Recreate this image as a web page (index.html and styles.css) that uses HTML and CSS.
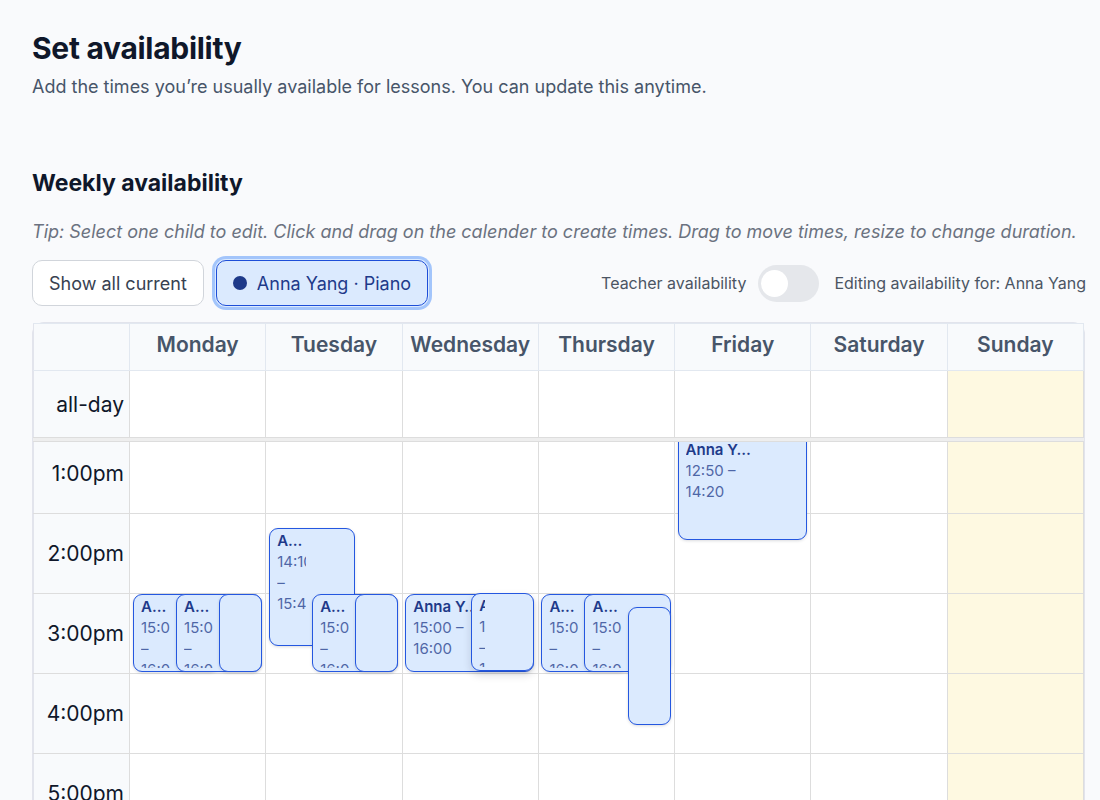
FILE: index.html
```html
<!DOCTYPE html>
<html lang="en">
<head>
    <meta charset="UTF-8">
    <meta name="viewport" content="width=device-width, initial-scale=1.0">
    <title>Set availability</title>
    <link rel="stylesheet" href="styles.css">
</head>
<body>
    <main class="page">
        <header class="page-header">
            <h1>Set availability</h1>
            <p>Add the times you’re usually available for lessons. You can update this anytime.</p>
        </header>

        <h2>Weekly availability</h2>
        <p class="tip">Tip: Select one child to edit. Click and drag on the calender to create times. Drag to move times, resize to change duration.</p>

        <div class="toolbar">
            <button type="button" class="chip">Show all current</button>
            <button type="button" class="chip chip-active"><span class="dot"></span>Anna Yang · Piano</button>
            <div class="toolbar-right">
                <label for="teacher">Teacher availability</label>
                <input type="checkbox" id="teacher" class="switch">
                <span class="editing">Editing availability for: Anna Yang</span>
            </div>
        </div>

        <div class="calendar">
            <table class="days">
                <thead>
                    <tr>
                        <th class="axis"></th>
                        <th>Monday</th>
                        <th>Tuesday</th>
                        <th>Wednesday</th>
                        <th>Thursday</th>
                        <th>Friday</th>
                        <th>Saturday</th>
                        <th>Sunday</th>
                    </tr>
                </thead>
                <tbody>
                    <tr>
                        <td class="axis">all-day</td>
                        <td></td><td></td><td></td><td></td><td></td><td></td><td class="today"></td>
                    </tr>
                </tbody>
            </table>
            <div class="divider"></div>
            <div class="scroller">
                <div class="timegrid">
                    <table class="slots">
                        <tr><td class="axis">1:00pm</td><td></td><td></td><td></td><td></td><td></td><td></td><td class="today"></td></tr>
                        <tr><td class="axis">2:00pm</td><td></td><td></td><td></td><td></td><td></td><td></td><td class="today"></td></tr>
                        <tr><td class="axis">3:00pm</td><td></td><td></td><td></td><td></td><td></td><td></td><td class="today"></td></tr>
                        <tr><td class="axis">4:00pm</td><td></td><td></td><td></td><td></td><td></td><td></td><td class="today"></td></tr>
                        <tr><td class="axis">5:00pm</td><td></td><td></td><td></td><td></td><td></td><td></td><td class="today"></td></tr>
                    </table>
                    <!-- one column per day, events sit over the slots -->
                    <div class="events">
                        <div class="day">
                            <div class="event at-1500 first"><b>Anna Yang</b><span>15:00 – 16:00</span></div>
                            <div class="event at-1500 second"><b>Anna Yang</b><span>15:00 – 16:00</span></div>
                            <div class="event at-1500 third"></div>
                        </div>
                        <div class="day">
                            <div class="event at-1410 first"><b>Anna Yang</b><span>14:10 – 15:40</span></div>
                            <div class="event at-1500 second"><b>Anna Yang</b><span>15:00 – 16:00</span></div>
                            <div class="event at-1500 third"></div>
                        </div>
                        <div class="day">
                            <div class="event at-1500"><b>Anna Yang</b><span>15:00 – 16:00</span></div>
                            <div class="event at-1500 half hovered"><b>Anna Yang</b><span>15:00 – 16:00</span></div>
                        </div>
                        <div class="day">
                            <div class="event at-1500 first"><b>Anna Yang</b><span>15:00 – 16:00</span></div>
                            <div class="event at-1500 second"><b>Anna Yang</b><span>15:00 – 16:00</span></div>
                            <div class="event at-1510 third"></div>
                        </div>
                        <div class="day">
                            <div class="event at-1250"><b>Anna Yang</b><span>12:50 – 14:20</span></div>
                        </div>
                    </div>
                </div>
            </div>
        </div>
    </main>
</body>
</html>
```
FILE: styles.css
```css
* {
    box-sizing: border-box;
}

body {
    margin: 0;
    font-family: Inter, "Liberation Sans", sans-serif;
    background: #f9fafc;
    color: #0f172a;
}

h1, h2, p {
    margin: 0;
}

.page {
    display: flex;
    flex-direction: column;
    height: 100vh;
    padding: 28px 14px 0 32px;
    overflow: hidden;
}

.page-header {
    margin-bottom: 64px;
}

h1 {
    font-size: 30px;
    line-height: 40px;
    letter-spacing: -0.01em;
}

.page-header p {
    margin-top: 5px;
    font-size: 18px;
    line-height: 28px;
    color: #475569;
}

h2 {
    font-size: 23px;
    line-height: 36px;
    font-weight: 700;
}

.tip {
    margin-top: 19px;
    font-size: 18px;
    line-height: 24px;
    font-style: italic;
    color: #6b7280;
    white-space: nowrap;
}

.toolbar {
    display: flex;
    align-items: center;
    gap: 12px;
    margin: 16px 0;
}

.chip {
    display: flex;
    align-items: center;
    gap: 10px;
    height: 46px;
    padding: 0 16px;
    border: 1px solid #d1d5db;
    border-radius: 10px;
    background: #fff;
    font-family: inherit;
    font-size: 18px;
    color: #374151;
    cursor: pointer;
}

.chip-active {
    border-color: #1d4ed8;
    background: #dbeafe;
    color: #1e3a8a;
    box-shadow: 0 0 0 1px #dbeafe, 0 0 0 4px #a3c5fb;
}

.dot {
    width: 14px;
    height: 14px;
    border-radius: 50%;
    background: #1e3a8a;
}

.toolbar-right {
    display: flex;
    align-items: center;
    margin-left: auto;
    font-size: 16px;
    color: #4b5563;
}

.switch {
    appearance: none;
    width: 61px;
    height: 37px;
    margin: 0 15px 0 12px;
    padding: 5px 3px;
    border-radius: 19px;
    background: #e5e7eb;
    cursor: pointer;
}

.switch::before {
    content: "";
    display: block;
    width: 27px;
    height: 27px;
    border-radius: 50%;
    background: #fff;
}

.switch:checked {
    background: #1d4ed8;
}

.calendar {
    display: flex;
    flex: 1;
    flex-direction: column;
    min-height: 0;
    margin-right: 1px;
    border: 1px solid #e2e4ec;
    border-bottom: 0;
    border-radius: 12px 12px 0 0;
}

table {
    width: 100%;
    border-collapse: collapse;
    table-layout: fixed;
}

th, td {
    padding: 0;
    border: 1px solid #ddd;
    background: #fff;
}

th {
    height: 47px;
    padding-bottom: 6px;
    border-color: #e2e8f0;
    background: #f8fafc;
    font-size: 21px;
    font-weight: 600;
    color: #475569;
}

.days td {
    height: 67px;
}

.axis,
.days .axis {
    width: 96px;
    padding-right: 5px;
    border-left-color: #e2e4ec;
    background: #f8fafc;
    font-size: 21px;
    text-align: right;
}

.today {
    background: #fef9e1;
}

.divider {
    height: 3px;
    background: #eee;
}

.scroller {
    flex: 1;
    min-height: 0;
    overflow: hidden;
    border-top: 1px solid #ddd;
}

/* scrolled just past the 1pm line */
.timegrid {
    position: relative;
    margin-top: -9px;
}

.slots td {
    height: 80px;
}

.events {
    position: absolute;
    inset: 0;
    display: grid;
    grid-template-columns: repeat(7, 1fr);
    padding: 0 1px 0 97px;
}

.day {
    position: relative;
    margin: 0 4px 0 3px;
}

.event {
    position: absolute;
    left: 0;
    right: 0;
    padding: 2px 48px 0 7px;
    border: 1px solid #2457e0;
    border-radius: 9px;
    background: #dbeafe;
    box-shadow: 0 1px 3px rgba(15, 23, 42, 0.15);
    color: #1e3a8a;
    font-size: 15px;
    line-height: 21px;
    overflow: hidden;
}

.event b {
    display: block;
    font-weight: 600;
    line-height: 20px;
    overflow: hidden;
    text-overflow: ellipsis;
    white-space: nowrap;
}

.event span {
    display: block;
    height: 51px;
    overflow: hidden;
    opacity: 0.75;
}

.first {
    right: 33.33%;
}

.second {
    left: 33.33%;
}

.third {
    left: 66.67%;
    padding: 0;
}

.half {
    left: 51%;
}

/* 80px an hour, counted from 1pm */
.at-1250 {
    top: -12px;
    height: 119px;
    padding-top: 18px;
}

.at-1410 {
    top: 95px;
    height: 118px;
}

.at-1500 {
    top: 161px;
    height: 78px;
}

.at-1510 {
    top: 174px;
    height: 118px;
}

.at-1410 span {
    height: 80px;
}

.hovered {
    margin-top: -1px;
    box-shadow: 0 4px 8px rgba(15, 23, 42, 0.15);
}
```
